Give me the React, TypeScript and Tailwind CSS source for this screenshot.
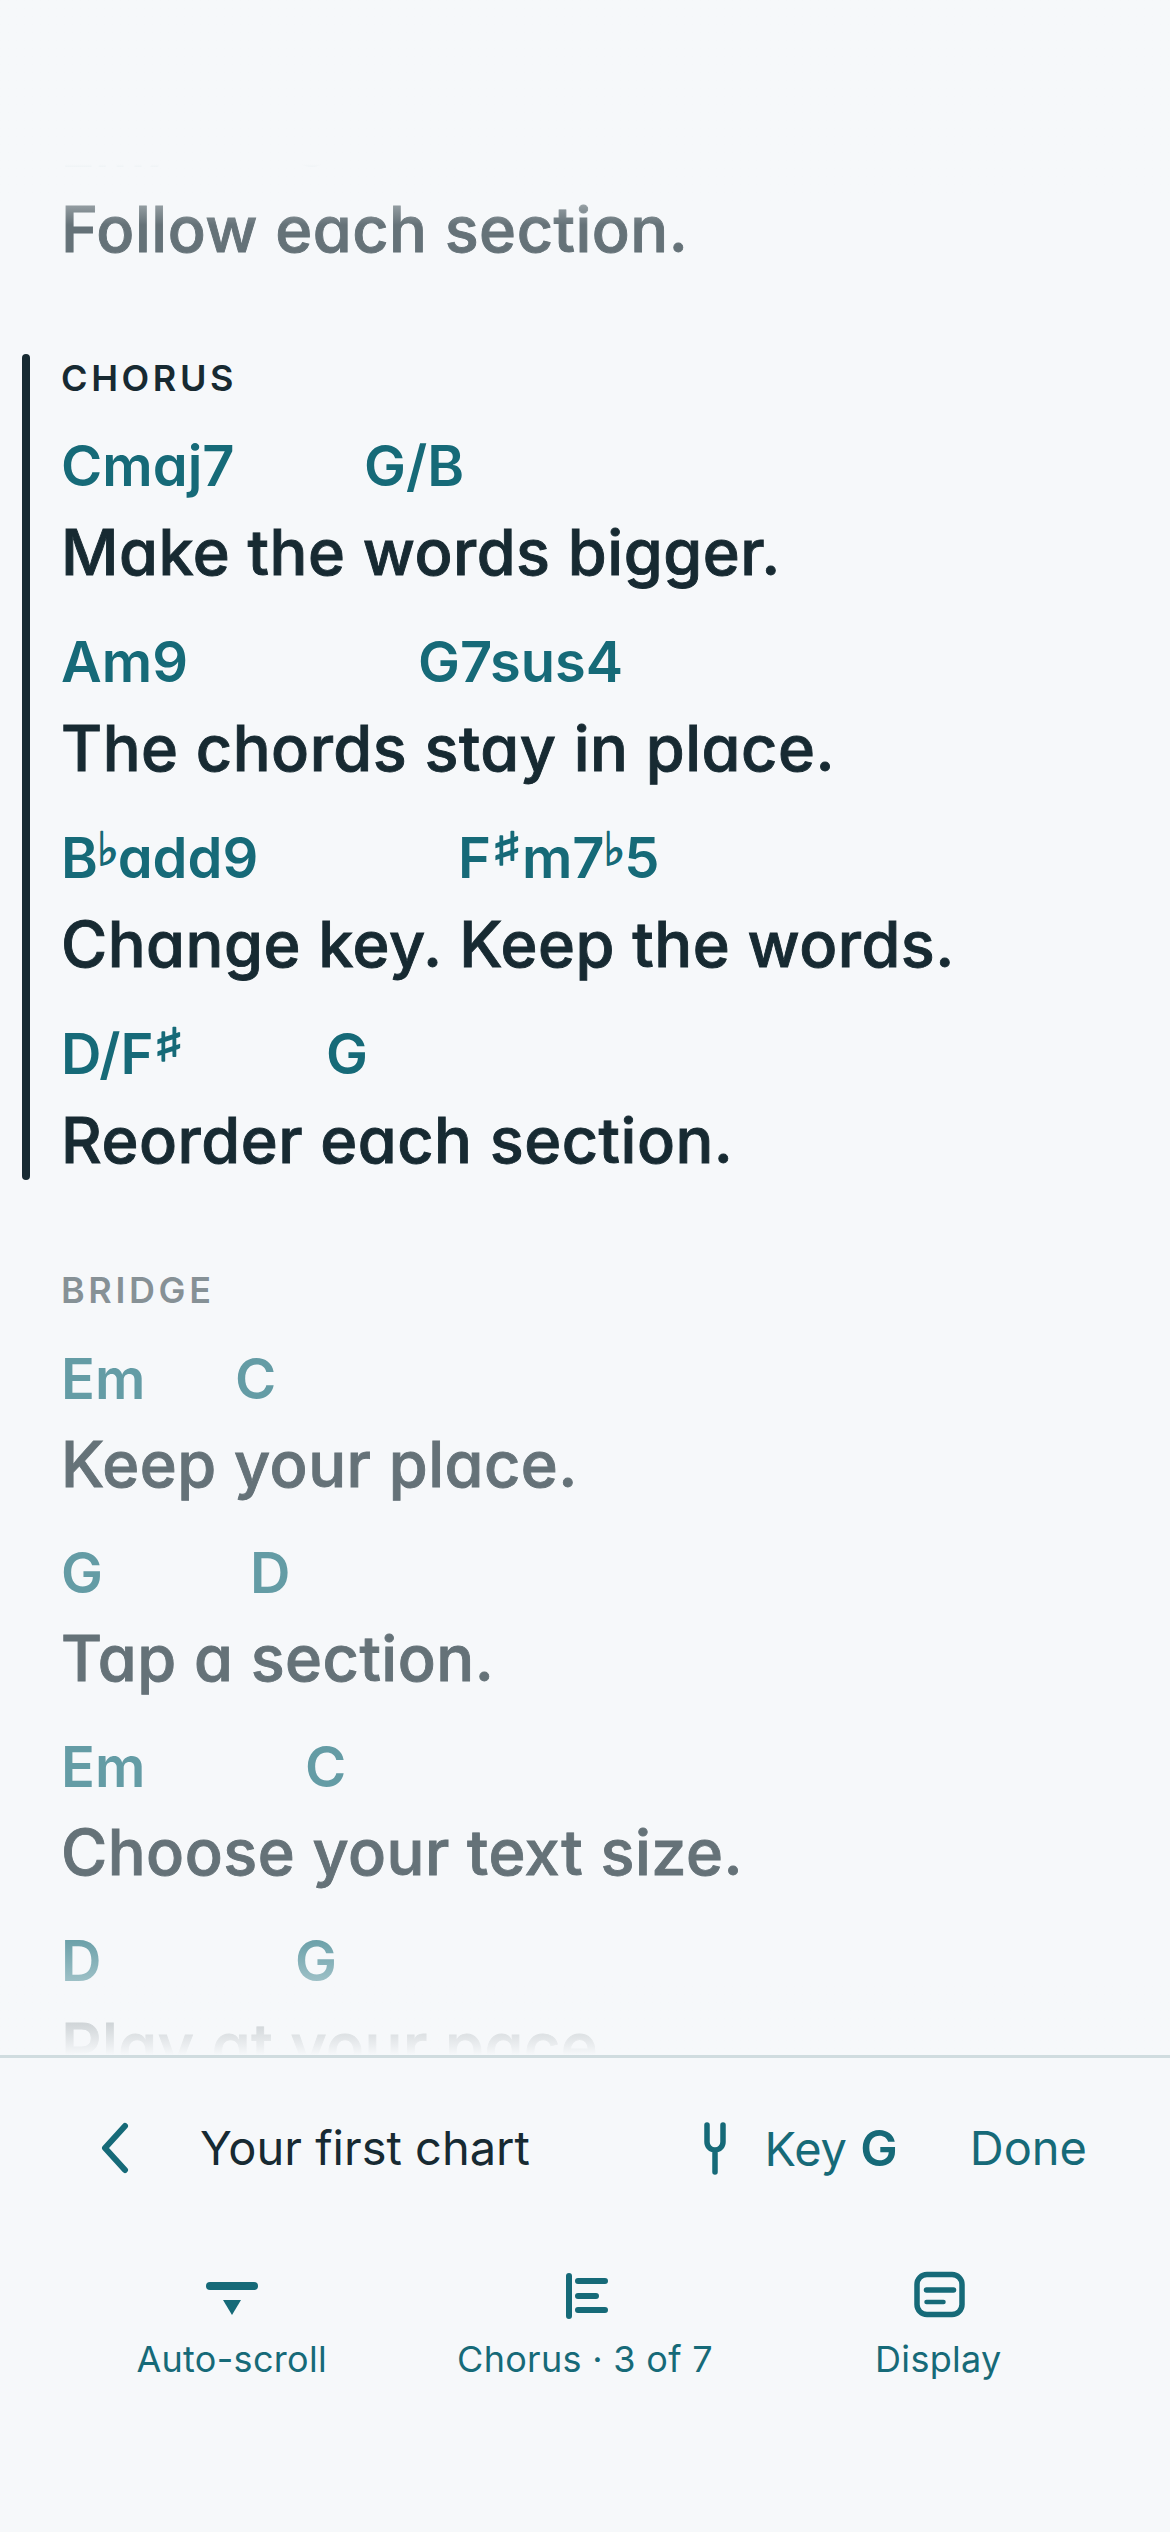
import React from 'react';

type Chord = { name: React.ReactNode; x: number };
type Line = { chords: Chord[]; lyric: string };

const Flat = () => (
  <span className="mx-[-1px] align-[13px] text-[46px] leading-none font-bold [font-family:'DejaVu_Sans',sans-serif] [-webkit-text-stroke:1.5px_currentColor]">♭</span>
);
const Sharp = () => (
  <span className="inline-block w-[31px] scale-x-[1.4] text-center align-[13px] text-[46px] leading-none font-bold [font-family:'DejaVu_Sans',sans-serif] [-webkit-text-stroke:1.5px_currentColor]">♯</span>
);

const chorus: Line[] = [
  { chords: [{ name: 'Cmaj7', x: 0 }, { name: 'G/B', x: 303 }], lyric: 'Make the words bigger.' },
  { chords: [{ name: 'Am9', x: 0 }, { name: 'G7sus4', x: 357 }], lyric: 'The chords stay in place.' },
  {
    chords: [
      { name: <>B<Flat />add9</>, x: 0 },
      { name: <>F<Sharp />m7<Flat />5</>, x: 397 },
    ],
    lyric: 'Change key. Keep the words.',
  },
  { chords: [{ name: <>D/F<Sharp /></>, x: 0 }, { name: 'G', x: 265 }], lyric: 'Reorder each section.' },
];

const bridge: Line[] = [
  { chords: [{ name: 'Em', x: 0 }, { name: 'C', x: 174 }], lyric: 'Keep your place.' },
  { chords: [{ name: 'G', x: 0 }, { name: 'D', x: 189 }], lyric: 'Tap a section.' },
  { chords: [{ name: 'Em', x: 0 }, { name: 'C', x: 244 }], lyric: 'Choose your text size.' },
  { chords: [{ name: 'D', x: 0 }, { name: 'G', x: 234 }], lyric: 'Play at your pace.' },
];

function ChartLine({ line, active, first }: { line: Line; active: boolean; first?: boolean }) {
  return (
    <div className="flex flex-col">
      <div className={`flex items-end text-[56px] leading-[86px] font-semibold ${first ? 'h-[91px]' : active ? 'h-[87px]' : 'h-[88px]'} ${active ? 'text-[#166a78]' : 'text-[#166a78]/65'}`}>
        {line.chords.map((chord, i) => (
          <span key={i} className="w-0 whitespace-nowrap" style={{ marginLeft: i ? chord.x : 0 }}>
            {chord.name}
          </span>
        ))}
      </div>
      <div className={`text-[63px] leading-[88px] font-medium tracking-[0.5px] whitespace-nowrap [-webkit-text-stroke:0.9px_currentColor] ${first ? '-mt-[5px]' : active ? '-mt-[1px]' : '-mt-[2px]'} ${active ? 'h-[110px] text-[#172a32]' : 'h-[108px] text-[#657278]'}`}>
        {line.lyric}
      </div>
    </div>
  );
}

function ToolbarItem({ icon, label }: { icon: React.ReactNode; label: string }) {
  return (
    <div className="flex flex-col items-center">
      <div className="flex h-[60px] items-center justify-center">{icon}</div>
      <div className="mt-[11px] text-[36px] leading-[44px] tracking-[0.3px]">{label}</div>
    </div>
  );
}

export default function App() {
  return (
    <div className="flex h-[2532px] w-[1170px] flex-col overflow-hidden bg-[#f6f8fa] [font-family:Inter,sans-serif]">
      <div className="relative h-[2055px] overflow-hidden [font-feature-settings:'cv11']">
        <div className="flex flex-col pt-[99px] pl-[61px]">
          <ChartLine line={{ chords: [{ name: 'Em7', x: 0 }, { name: 'C', x: 229 }], lyric: 'Follow each section.' }} active={false} first />
        </div>
        <div className="relative mt-[61px] flex flex-col pl-[61px]">
          <div className="absolute top-0 left-[22px] h-[826px] w-[8px] rounded-full bg-[#172a32]" />
          <div className="mb-[20px] text-[36px] leading-[48px] font-semibold tracking-[3.6px] text-[#172a32]">CHORUS</div>
          {chorus.map((line) => (
            <ChartLine key={line.lyric} line={line} active />
          ))}
        </div>
        <div className="mt-[60px] flex flex-col pl-[61px]">
          <div className="mb-[20px] text-[36px] leading-[48px] font-semibold tracking-[3.6px] text-[#172a32]/50">BRIDGE</div>
          {bridge.map((line) => (
            <ChartLine key={line.lyric} line={line} active={false} />
          ))}
        </div>
        {/* fades over the scrolling text */}
        <div className="absolute inset-x-0 top-0 h-[225px] bg-gradient-to-b from-[#f6f8fa] from-73% to-transparent" />
        <div className="absolute inset-x-0 bottom-0 h-[121px] bg-gradient-to-t from-[#f6f8fa] to-transparent" />
      </div>
      <div className="border-t-[3px] border-[#d0dcdf]">
        <div className="flex h-[180px] items-center pr-[83px] pl-[99px] text-[47px] text-[#166a78]">
          <svg width="32" height="52" viewBox="0 0 32 52" fill="none" stroke="#166a78" strokeWidth="6" strokeLinecap="round" strokeLinejoin="round">
            <path d="M26 4 6 26l20 22" />
          </svg>
          <span className="ml-[69px] text-[#172a32]">Your first chart</span>
          <svg className="ml-auto" width="22" height="53" viewBox="0 0 22 53" fill="none" stroke="#166a78" strokeWidth="5.5" strokeLinecap="round">
            <path d="M3 3v17a8 8 0 0 0 16 0V3M11 28v22" />
          </svg>
          <span className="ml-[38px]">
            Key <span className="text-[50px] font-semibold">G</span>
          </span>
          <span className="ml-[72px]">Done</span>
        </div>
        <div className="mt-[28px] grid grid-cols-3 px-[55px] text-[#166a78]">
          <ToolbarItem
            label="Auto-scroll"
            icon={
              <svg width="60" height="60" viewBox="0 0 60 60" fill="#166a78">
                <rect x="4" y="16" width="52" height="8" rx="4" />
                <path d="M21 34h18l-9 15z" />
              </svg>
            }
          />
          <ToolbarItem
            label="Chorus · 3 of 7"
            icon={
              <svg width="60" height="60" viewBox="0 0 60 60" fill="none" stroke="#166a78" strokeWidth="6" strokeLinecap="round">
                <path d="M14 10v40M23 15h27M23 30h18M23 44h27" />
              </svg>
            }
          />
          <ToolbarItem
            label="Display"
            icon={
              <svg width="60" height="60" viewBox="0 0 60 60" fill="none" stroke="#166a78" strokeWidth="5.5" strokeLinecap="round">
                <rect x="9" y="8.5" width="45" height="40" rx="10" />
                <path d="M18.5 24h27" />
                <path d="M18.5 36h17" strokeWidth="4.5" />
              </svg>
            }
          />
        </div>
      </div>
    </div>
  );
}
